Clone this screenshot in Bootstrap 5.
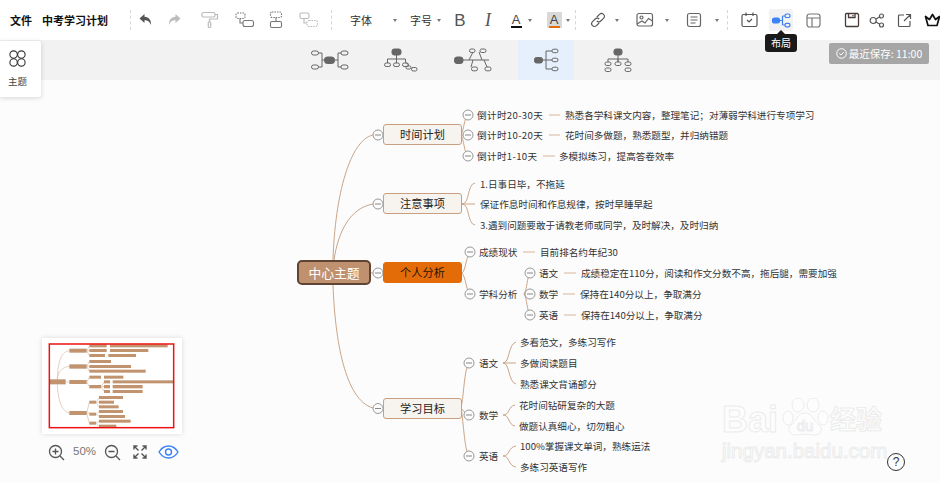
<!DOCTYPE html>
<html lang="zh"><head><meta charset="utf-8"><title>中考学习计划</title>
<link href="https://cdn.jsdelivr.net/npm/bootstrap@5.3.0/dist/css/bootstrap.min.css" rel="stylesheet">
<style>
html,body{width:940px;height:483px;overflow:hidden;background:#fcfcfc}
body{font-family:"Liberation Sans","Noto Sans CJK SC",sans-serif;position:relative;color:#333}
.cjk{font-family:"Noto Sans CJK SC",sans-serif}
.topbar{height:40px;background:#fff;padding-left:10px;width:960px}
.subbar{height:40px;background:#f2f2f2}
.canvas{height:403px;position:relative;background:#fcfcfc}
.slot{display:flex;align-items:center;justify-content:center;flex:none;height:40px}
.w6{width:6px}.w10{width:10px}.w22{width:22px}.w24{width:24px}.w26{width:26px}.w28{width:28px}.w30{width:30px}.w32{width:32px}.w36{width:36px}.w38{width:38px}.w40{width:40px}.w46{width:46px}.w58{width:58px}
.ml1{margin-left:1px}.ml3{margin-left:3px}.ml4{margin-left:4px}.ml6{margin-left:6px}.ml7{margin-left:7px}.ml10{margin-left:10px}
.title-a{font-size:11px;font-weight:700;color:#111;line-height:1;white-space:nowrap;flex:none;width:22px}
.title-b{font-size:11px;font-weight:700;color:#111;line-height:1;white-space:nowrap;flex:none;width:66px;margin-left:10px}
.sep{width:0;height:20px;border-left:1px dashed #d5d5d5;flex:none}
.sep-a{margin-left:22px}.sep-b{margin-left:8px}
.tool-t{font-size:11px;color:#333}
.pad-l{padding-left:6px}
.caret-a{width:0;height:0;border-left:2.5px solid transparent;border-right:2.5px solid transparent;border-top:3px solid #777}
.bold-b{font-size:17px;color:#555;line-height:1}
.ital-i{font-family:"Liberation Serif",serif;font-style:italic;font-size:18px;color:#555;line-height:1}
.letter-a{font-size:13px;line-height:13px;color:#444;display:block;text-align:center}
.under-k{display:block;height:2px;width:11px;margin:0 auto;background:#111}
.under-o{display:block;height:2px;width:11px;margin:0 auto;background:#e46c0a}
.hl-box{background:#d9d9d9;padding:1px 2px 0;border-radius:1px}
.hl-slot{background:#f2f2f2;border-radius:2px;width:24px;height:22px}
.sub-btn{height:40px;display:flex;align-items:center;justify-content:center;flex:none}
.s1{margin-left:311px;width:38px}.s2{margin-left:35px;width:34px}.s3{margin-left:36px;width:39px}
.s4{margin-left:25px;width:56px;background:#e6f0fd}.s5{margin-left:30px;width:28px}
.save-tag{margin-left:197px;margin-top:3px;width:100px;height:21px;background:#a6a6a6;color:#fff;font-size:10.5px;border-radius:2px;line-height:21px;gap:2px}
.tip-b{position:absolute;left:765px;top:34px;width:32px;height:18px;background:#1a1a1a;color:#fff;font-size:10px;line-height:18px;text-align:center;border-radius:3px;z-index:5}
.tip-b::before{content:"";position:absolute;left:12px;top:-4px;border-left:4px solid transparent;border-right:4px solid transparent;border-bottom:4px solid #1a1a1a}
.theme-panel{position:absolute;left:0;top:41px;width:41px;height:56px;background:#fff;border-radius:0 3px 3px 0;box-shadow:0 1px 5px rgba(0,0,0,.16);z-index:4;font-size:9.5px;color:#444;padding-top:9px}
.theme-ic{margin-left:9px}
.theme-label{margin-top:10px;line-height:1;padding-right:6px}
.map-layer{position:absolute;left:0;top:-80px;width:940px;height:483px}
.map-lines{position:absolute;left:0;top:0}
.main-node{position:absolute;display:flex;align-items:center;justify-content:center;font-size:11.2px;height:21px;border:1px solid #c89f80;background:#f7f3ee;border-radius:3px;color:#222;left:383px;width:79px;font-family:"Noto Sans CJK SC",sans-serif}
.root-node{position:absolute;left:297px;top:260px;width:74px;height:25px;display:flex;align-items:center;justify-content:center;background:#c0916f;border:2px solid #5f4434;border-radius:5px;color:#fff;font-size:12.8px;font-family:"Noto Sans CJK SC",sans-serif}
.mn1{top:124px}.mn2{top:193px}.mn3{top:262px;background:#e36c09;border-color:#e36c09;color:#2a1505}.mn4{top:398px}
.leaf-t{position:absolute;font-size:9.6px;line-height:12px;white-space:nowrap;color:#333;transform:translateY(-50%);font-family:"Noto Sans CJK SC",sans-serif}
.spaced{letter-spacing:.35px}
.x477{left:477px}.x479{left:479px}.x480{left:480px}.x519{left:519px}.x520{left:520px}.x539{left:539px}.x540{left:540px}.x559{left:559px}.x565{left:565px}.x580{left:580px}.x581{left:581px}
.y115{top:115px}.y135{top:135px}.y156{top:156px}.y184{top:184px}.y204{top:204px}.y225{top:225px}.y252{top:252px}.y273{top:273px}.y294{top:294px}.y315{top:315px}.y342{top:342px}.y363{top:363px}.y384{top:384px}.y405{top:405px}.y415{top:415px}.y426{top:426px}.y446{top:446px}.y456{top:456px}.y467{top:467px}
.mini-map{position:absolute;left:42px;top:258px;width:140px;height:96px;background:#fff;box-shadow:0 0 5px rgba(0,0,0,.14)}
.zoom-row{position:absolute;left:48px;top:362px;height:20px;width:134px}
.zoom-pct{font-size:11.5px;color:#777;width:25px;margin-left:8px;margin-right:6px}
.gap12{margin-left:12px}.gap11{margin-left:11px}
.wm-wrap{position:absolute;left:722px;top:322px;width:166px;height:62px;color:#fdfdfd;-webkit-text-stroke:1px #ececec;line-height:1;z-index:1}
.wm-a{font-size:36px;font-weight:700;position:absolute;left:0;top:0}
.wm-b{font-size:26px;font-weight:700;position:absolute;left:108px;top:3px;font-family:"Noto Sans CJK SC",sans-serif}
.wm-c{font-size:20.5px;position:absolute;left:0;top:39px}
.wm-paw{position:absolute;left:58px;top:-4px}
.help-b{position:absolute;left:887px;top:373px;width:18px;height:18px;border:1px solid #333;border-radius:50%;font-size:12px;line-height:16px;text-align:center;color:#333;background:#fcfcfc;z-index:2}
</style></head>
<body>
<div class="topbar d-flex align-items-center">
  <span class="title-a cjk">文件</span><span class="title-b cjk">中考学习计划</span>
  <span class="sep sep-a"></span>
  <span class="slot w30"><svg width="16" height="16" viewBox="0 0 16 16"><path d="M6.500 2 1.500 6.500l5 4.500V8.300c3 0 5 1 6.300 4.700.7-5-1.800-8-6.300-8.300z" fill="#555"/></svg></span>
  <span class="slot w26"><svg width="16" height="16" viewBox="0 0 16 16"><path d="M9.500 2l5 4.500-5 4.500V8.300c-3 0-5 1-6.300 4.700-.7-5 1.800-8 6.300-8.300z" fill="#bdbdbd"/></svg></span>
  <span class="slot w46"><svg width="18" height="18" viewBox="0 0 18 18" fill="none" stroke="#bbb" stroke-width="1.200"><rect x="1" y="1.500" width="13" height="4.500" rx="1.500"/><path d="M14 3.500h2.500V8H8.500v3"/><rect x="7.300" y="11" width="2.400" height="5.500" rx=".8"/></svg></span>
  <span class="slot w24"><svg width="20" height="16" viewBox="0 0 20 16" fill="none" stroke="#777" stroke-width="1.100"><rect x="1" y="1" width="9" height="5.500" rx="1.500" stroke-dasharray="1.500 1"/><path d="M5 6.500v4.500h3"/><rect x="8" y="8.500" width="10.500" height="6" rx="2"/></svg></span>
  <span class="slot w38"><svg width="14" height="18" viewBox="0 0 14 18" fill="none" stroke="#777" stroke-width="1.100"><rect x="1.500" y="1" width="11" height="5.500" rx="1.500" stroke-dasharray="1.500 1"/><path d="M7 6.500v4"/><rect x="1.500" y="10.500" width="11" height="6" rx="1.500"/></svg></span>
  <span class="slot w28"><svg width="20" height="16" viewBox="0 0 20 16" fill="none" stroke="#bbb" stroke-width="1.100"><rect x="1" y="1" width="9" height="5.500" rx="1.500"/><path d="M5 6.500v4.500h3"/><rect x="8" y="8.500" width="10.500" height="6" rx="2" stroke-dasharray="1.500 1"/></svg></span>
  <span class="sep sep-b"></span>
  <span class="slot w58 tool-t cjk">字体</span><span class="slot w10"><i class="caret-a"></i></span>
  <span class="slot w36 tool-t pad-l cjk">字号</span><span class="slot w6"><i class="caret-a"></i></span>
  <span class="slot w30 ml3"><span class="bold-b">B</span></span>
  <span class="slot w26"><span class="ital-i">I</span></span>
  <span class="slot w22 ml4"><span><span class="letter-a">A</span><span class="under-k"></span></span></span>
  <span class="slot w6"><i class="caret-a"></i></span>
  <span class="slot w22 ml10"><span class="hl-box"><span class="letter-a">A</span><span class="under-o"></span></span></span>
  <span class="slot w6"><i class="caret-a"></i></span>
  <span class="sep ml4"></span>
  <span class="slot w32 ml6"><svg width="16" height="16" viewBox="0 0 16 16" fill="none" stroke="#555" stroke-width="1.100"><path d="M6.800 5 9.500 2.300a2.800 2.800 0 0 1 4 4L10.800 9a2.800 2.800 0 0 1-4 0M9.200 11 6.500 13.700a2.800 2.800 0 0 1-4-4L5.200 7a2.800 2.800 0 0 1 4 0"/></svg></span>
  <span class="slot w6"><i class="caret-a"></i></span>
  <span class="slot w38 ml6"><svg width="18" height="16" viewBox="0 0 18 16" fill="none" stroke="#666" stroke-width="1.200"><rect x="1" y="1.500" width="15.500" height="12.500" rx="2"/><circle cx="5.500" cy="5.500" r="1.500"/><path d="M1 12l5-3 3 2 3.500-4.500L16.500 9"/></svg></span>
  <span class="slot w6"><i class="caret-a"></i></span>
  <span class="slot w40 ml4"><svg width="16" height="16" viewBox="0 0 16 16" fill="none" stroke="#666" stroke-width="1.200"><rect x="1.500" y="1.500" width="13" height="13" rx="2"/><path d="M4.500 5h7M4.500 8h7M4.500 11h5"/></svg></span>
  <span class="slot w6"><i class="caret-a"></i></span>
  <span class="sep ml7"></span>
  <span class="slot w40 ml1"><svg width="17" height="16" viewBox="0 0 17 16" fill="none" stroke="#555" stroke-width="1.200"><rect x="1" y="2.500" width="15" height="12" rx="1.500"/><path d="M5 .5v3.500M12 .5v3.500M6 8l2 2 3-3"/></svg></span>
  <span class="slot w24"><span class="slot hl-slot"><svg width="19" height="15" viewBox="0 0 19 15" fill="none" stroke="#3b82f6" stroke-width="1.200"><rect x=".5" y="5" width="7" height="5" rx="1.800" fill="#3b82f6"/><path d="M7.500 7.500h3M10.500 3v9M10.500 3h2.500M10.500 12h2.500"/><rect x="13" y="1" width="5" height="3.500" rx="1.600"/><rect x="13" y="10.300" width="5" height="3.500" rx="1.600"/></svg></span></span>
  <span class="slot w40"><svg width="15" height="15" viewBox="0 0 15 15" fill="none" stroke="#777" stroke-width="1.200"><rect x="1" y="1" width="13" height="13" rx="2.500"/><path d="M1 5h13M6 5v9"/></svg></span>
  <span class="slot w24 ml7"><svg width="16" height="16" viewBox="0 0 16 16" fill="none" stroke="#4a3a3a" stroke-width="1.300"><path d="M2.500 1.500h11l1 1v11a1 1 0 0 1-1 1h-11a1 1 0 0 1-1-1v-11a1 1 0 0 1 1-1z"/><path d="M4.500 1.500v4h6.500v-4M9 3v1.200"/></svg></span>
  <span class="slot w26"><svg width="16" height="15" viewBox="0 0 16 15" fill="none" stroke="#555" stroke-width="1.200"><circle cx="4.200" cy="7.500" r="3"/><circle cx="12.500" cy="3" r="2"/><circle cx="12.500" cy="12" r="2"/><path d="M7 6 10.800 3.800M7 9l3.800 2.200"/></svg></span>
  <span class="slot w28"><svg width="15" height="15" viewBox="0 0 15 15" fill="none" stroke="#555" stroke-width="1.200"><path d="M7 2H2.500a1 1 0 0 0-1 1v9.500a1 1 0 0 0 1 1H12a1 1 0 0 0 1-1V8M9 1.500h4.500V6M13.500 1.500 7 8"/></svg></span>
  <span class="slot w28"><svg width="17" height="14" viewBox="0 0 17 14" fill="none" stroke="#111" stroke-width="1.700"><path d="M4 12.500h9L15.500 3.500 11.500 6.500 8.500 1.500 5.500 6.500 1.500 3.500z" stroke-linejoin="round"/></svg></span>
</div>
<div class="subbar d-flex">
  <div class="sub-btn s1"><svg width="38" height="20" viewBox="0 0 38 20" fill="none" stroke="#666" stroke-width="1"><rect x="13.500" y="7" width="10" height="6.500" rx="2.800" fill="#666"/><path d="M13.500 10H11V3H8M11 10v7H8M23.500 10H27V3h3M27 10v7h3"/><rect x=".5" y="1" width="7" height="4" rx="2"/><rect x=".5" y="15" width="7" height="4" rx="2"/><rect x="30" y="1" width="7" height="4" rx="2"/><rect x="30" y="15" width="7" height="4" rx="2"/></svg></div>
  <div class="sub-btn s2"><svg width="34" height="24" viewBox="0 0 34 24" fill="none" stroke="#666" stroke-width="1"><rect x="8" y="1" width="9" height="6" rx="2.200" fill="#666"/><path d="M12.500 7v4M3.500 15v-4h18v3M12.500 11v4M21.500 14l3 3"/><rect x=".5" y="15" width="6" height="3.500" rx="1.700"/><rect x="9.500" y="15" width="6" height="3.500" rx="1.700"/><rect x="18.500" y="15" width="6" height="3.500" rx="1.700"/><rect x="22" y="18" width="5" height="3" rx="1.500"/><rect x="27.500" y="19.500" width="5.500" height="3.500" rx="1.700"/></svg></div>
  <div class="sub-btn s3"><svg width="39" height="24" viewBox="0 0 39 24" fill="none" stroke="#666" stroke-width="1"><rect x=".5" y="9" width="8.500" height="6.500" rx="2.500" fill="#666"/><path d="M9 12h26M15 12 19 4M28 12l-3-8M19 12l-2 7M30 12l3 7"/><rect x="15.500" y="1" width="5.500" height="3.500" rx="1.700"/><rect x="26" y="1" width="6" height="3.500" rx="1.700"/><rect x="17.500" y="19" width="6" height="3.800" rx="1.700"/><rect x="31" y="19" width="6" height="3.800" rx="1.700"/></svg></div>
  <div class="sub-btn s4"><svg width="25" height="24" viewBox="0 0 25 24" fill="none" stroke="#666" stroke-width="1"><rect x=".5" y="9.500" width="8" height="5.500" rx="2" fill="#666"/><path d="M8.500 12H12M12 3v18M12 3h6M12 12h6M12 21h6"/><rect x="18" y="1.200" width="6" height="3.500" rx="1.700"/><rect x="18" y="10.200" width="6" height="3.500" rx="1.700"/><rect x="18" y="19.200" width="6" height="3.500" rx="1.700"/></svg></div>
  <div class="sub-btn s5"><svg width="28" height="24" viewBox="0 0 28 24" fill="none" stroke="#666" stroke-width="1"><rect x="10" y="1" width="8" height="6" rx="2" fill="#666"/><path d="M14 7v7M4 14v-3h20v3M14 11v3"/><rect x="1" y="14" width="6" height="3.500" rx="1.700"/><rect x="1" y="20" width="6" height="3.500" rx="1.700"/><rect x="11" y="14" width="6" height="3.500" rx="1.700"/><rect x="21" y="14" width="6" height="3.500" rx="1.700"/><rect x="21" y="20" width="6" height="3.500" rx="1.700"/></svg></div>
  <div class="save-tag d-flex justify-content-center cjk"><svg class="align-self-center" width="11" height="11" viewBox="0 0 11 11" fill="none" stroke="#fff"><circle cx="5.500" cy="5.500" r="4.800"/><path d="M3.300 5.500 5 7l2.700-3"/></svg><span>最近保存: 11:00</span></div>
</div>
<div class="tip-b cjk">布局</div>
<div class="theme-panel text-center">
  <svg class="d-block theme-ic" width="17" height="17" viewBox="0 0 17 17" fill="none" stroke="#333" stroke-width="1.100"><circle cx="4.600" cy="4.600" r="3.700"/><circle cx="12.400" cy="4.600" r="3.700"/><circle cx="4.600" cy="12.400" r="3.700"/><circle cx="12.400" cy="12.400" r="3.700"/></svg>
  <div class="theme-label cjk">主题</div>
</div>
<div class="canvas">
  <div class="wm-wrap"><span class="wm-a">Bai</span>
    <svg class="wm-paw" width="50" height="40" viewBox="0 0 50 40" fill="#fdfdfd" stroke="#ececec"><ellipse cx="8" cy="20" rx="5" ry="7"/><ellipse cx="18" cy="7" rx="6" ry="7"/><ellipse cx="33" cy="7" rx="6" ry="7"/><ellipse cx="43" cy="20" rx="5" ry="7"/><path d="M25 15c8 0 8 8 14 12 5 4 1 11-6 10-3 0-5-1-8-1s-5 1-8 1c-7 1-11-6-6-10 6-4 6-12 14-12z"/><text x="25" y="33" font-size="15" text-anchor="middle" font-family="Liberation Sans">du</text></svg>
    <span class="wm-b">经验</span><span class="wm-c">jingyan.baidu.com</span></div>
  <div class="map-layer">
    <svg class="map-lines" width="940" height="483" viewBox="0 0 940 483" fill="none" stroke="#cba587" stroke-width="1">
      <path d="M333 260C335 195 350 140 373 135M334 260C338 232 350 208 373 204M371 273H373M333 285C335 340 345 400 373 408"/>
      <path d="M461 135C464 130 464 118 468 115M461 135H468M461 135C464 140 464 152 468 156"/>
      <path d="M462 204C470 204 467 184 475 183M462 204H475M462 204C470 204 467 224 475 225"/>
      <path d="M462 273C466 270 466 256 470 252M462 273C466 278 466 290 470 294"/>
      <path d="M524 294C527 290 527 277 530 273M524 294H530M524 294C527 298 527 311 530 315"/>
      <path d="M461 408C464 395 464 370 469 363M461 408C463 410 465 414 469 415M461 408C464 425 464 448 469 456"/>
      <path d="M503 363C510 363 508 344 516 342M503 363H516M503 363C510 363 508 382 516 384"/>
      <path d="M503 415C510 415 508 406 515 405M503 415C510 415 508 425 515 426"/>
      <path d="M503 456C510 456 508 447 516 446M503 456C510 456 508 466 516 467"/>
      <path d="M549 115H560M549 135H560M543 156H555M523 252H535M564 273H576M563 294H575M564 315H576" stroke="#d8b59b"/>
      <g fill="#fcfcfc" stroke="#999">
        <circle cx="378" cy="135" r="5"/><circle cx="378" cy="204" r="5"/><circle cx="378" cy="273" r="5"/><circle cx="378" cy="408.500" r="5"/>
        <circle cx="468" cy="115" r="5"/><circle cx="468" cy="135" r="5"/><circle cx="468" cy="156" r="5"/>
        <circle cx="470" cy="252" r="5"/><circle cx="470" cy="294" r="5"/>
        <circle cx="530" cy="273" r="5"/><circle cx="530" cy="294" r="5"/><circle cx="530" cy="315" r="5"/>
        <circle cx="469" cy="363" r="5"/><circle cx="469" cy="415" r="5"/><circle cx="469" cy="456" r="5"/>
      </g>
      <path stroke="#888" d="M375 135h6M375 204h6M375 273h6M375 408.500h6M465 115h6M465 135h6M465 156h6M467 252h6M467 294h6M527 273h6M527 294h6M527 315h6M466 363h6M466 415h6M466 456h6"/>
    </svg>
    <div class="root-node">中心主题</div>
    <div class="main-node mn1">时间计划</div>
    <div class="main-node mn2">注意事项</div>
    <div class="main-node mn3">个人分析</div>
    <div class="main-node mn4">学习目标</div>
    <div class="leaf-t x477 y115 spaced">倒计时20-30天</div><div class="leaf-t x565 y115">熟悉各学科课文内容，整理笔记；对薄弱学科进行专项学习</div>
    <div class="leaf-t x477 y135 spaced">倒计时10-20天</div><div class="leaf-t x565 y135">花时间多做题，熟悉题型，并归纳错题</div>
    <div class="leaf-t x477 y156 spaced">倒计时1-10天</div><div class="leaf-t x559 y156">多模拟练习，提高答卷效率</div>
    <div class="leaf-t x480 y184">1.日事日毕，不拖延</div>
    <div class="leaf-t x480 y204">保证作息时间和作息规律，按时早睡早起</div>
    <div class="leaf-t x480 y225">3.遇到问题要敢于请教老师或同学，及时解决，及时归纳</div>
    <div class="leaf-t x479 y252">成绩现状</div><div class="leaf-t x540 y252">目前排名约年纪30</div>
    <div class="leaf-t x479 y294">学科分析</div>
    <div class="leaf-t x539 y273">语文</div><div class="leaf-t x581 y273">成绩稳定在110分，阅读和作文分数不高，拖后腿，需要加强</div>
    <div class="leaf-t x539 y294">数学</div><div class="leaf-t x580 y294">保持在140分以上，争取满分</div>
    <div class="leaf-t x539 y315">英语</div><div class="leaf-t x581 y315">保持在140分以上，争取满分</div>
    <div class="leaf-t x479 y363">语文</div><div class="leaf-t x479 y415">数学</div><div class="leaf-t x479 y456">英语</div>
    <div class="leaf-t x520 y342">多看范文，多练习写作</div><div class="leaf-t x520 y363">多做阅读题目</div><div class="leaf-t x520 y384">熟悉课文背诵部分</div>
    <div class="leaf-t x519 y405">花时间钻研复杂的大题</div><div class="leaf-t x519 y426">做题认真细心，切勿粗心</div>
    <div class="leaf-t x520 y446">100%掌握课文单词，熟练运法</div><div class="leaf-t x520 y467">多练习英语写作</div>
  </div>
  <div class="mini-map">
    <svg width="140" height="96" viewBox="36 24 420 288"><g fill="none" stroke="#d6b8a0" stroke-width="2"><path d="M82 148C84 90 95 65 118 62M82 148C84 125 95 112 118 109M82 163C84 210 95 245 118 249M107 156h11M170 62l8-14M170 62h8M170 62l8 14M170 109l8-15M170 109h8M170 109l8 15M170 156l8-14M170 156l8 14M213 170l9-14M213 170h9M213 170l9 14M170 249l8-32M170 249h8M170 249l8 30M198 217l9-14M198 217h9M198 217l9 14M198 253l9-8M198 253l9 6M198 280l9-6M198 280l9 8"/></g>
    <g fill="#c1946f"><rect x="58" y="148" width="49" height="15"/><rect x="118" y="56" width="52" height="12"/><rect x="118" y="103" width="52" height="13"/><rect x="118" y="150" width="52" height="12"/><rect x="118" y="243" width="52" height="12"/>
    <rect x="178" y="43" width="52" height="9"/><rect x="240" y="43" width="173" height="9"/><rect x="178" y="57" width="52" height="9"/><rect x="240" y="57" width="115" height="9"/><rect x="178" y="72" width="47" height="9"/><rect x="235" y="72" width="83" height="9"/>
    <rect x="178" y="90" width="65" height="9"/><rect x="178" y="105" width="125" height="9"/><rect x="178" y="119" width="169" height="9"/>
    <rect x="178" y="137" width="35" height="9"/><rect x="222" y="137" width="58" height="9"/><rect x="178" y="165" width="35" height="10"/><rect x="222" y="151" width="18" height="9"/><rect x="248" y="151" width="182" height="9"/><rect x="222" y="165" width="18" height="10"/><rect x="248" y="165" width="90" height="10"/><rect x="222" y="180" width="18" height="9"/><rect x="248" y="180" width="90" height="9"/>
    <rect x="178" y="212" width="20" height="9"/><rect x="207" y="198" width="72" height="9"/><rect x="207" y="212" width="45" height="9"/><rect x="207" y="226" width="59" height="9"/><rect x="178" y="248" width="20" height="9"/><rect x="207" y="240" width="72" height="9"/><rect x="207" y="255" width="78" height="9"/><rect x="178" y="275" width="20" height="9"/><rect x="207" y="269" width="95" height="9"/><rect x="207" y="284" width="52" height="8"/></g>
    <rect x="58" y="42" width="373" height="251" fill="none" stroke="#ee1111" stroke-width="4.500"/></svg>
  </div>
  <div class="zoom-row d-flex align-items-center">
    <svg width="17" height="17" viewBox="0 0 17 17" fill="none" stroke="#555" stroke-width="1.300"><circle cx="7.500" cy="7.500" r="6"/><path d="M12 12l4 4M7.500 4.500v6M4.500 7.500h6"/></svg>
    <span class="zoom-pct">50%</span>
    <svg width="17" height="17" viewBox="0 0 17 17" fill="none" stroke="#555" stroke-width="1.300"><circle cx="7.500" cy="7.500" r="6"/><path d="M12 12l4 4M4.500 7.500h6"/></svg>
    <svg class="gap12" width="14" height="14" viewBox="0 0 14 14" fill="none" stroke="#555" stroke-width="1.400"><path d="M1 4.500V1h3.500M9.500 1H13v3.500M13 9.500V13H9.500M4.500 13H1V9.500M1 1l4.500 4.500M13 1 8.500 5.500M13 13 8.500 8.500M1 13l4.500-4.500"/></svg>
    <svg class="gap11" width="21" height="14" viewBox="0 0 21 14" fill="none" stroke="#3b82f6" stroke-width="1.400"><path d="M1 7c5-8 14-8 19 0-5 8-14 8-19 0z"/><circle cx="10.500" cy="7" r="3"/></svg>
  </div>
  <div class="help-b">?</div>
</div>
</body></html>
